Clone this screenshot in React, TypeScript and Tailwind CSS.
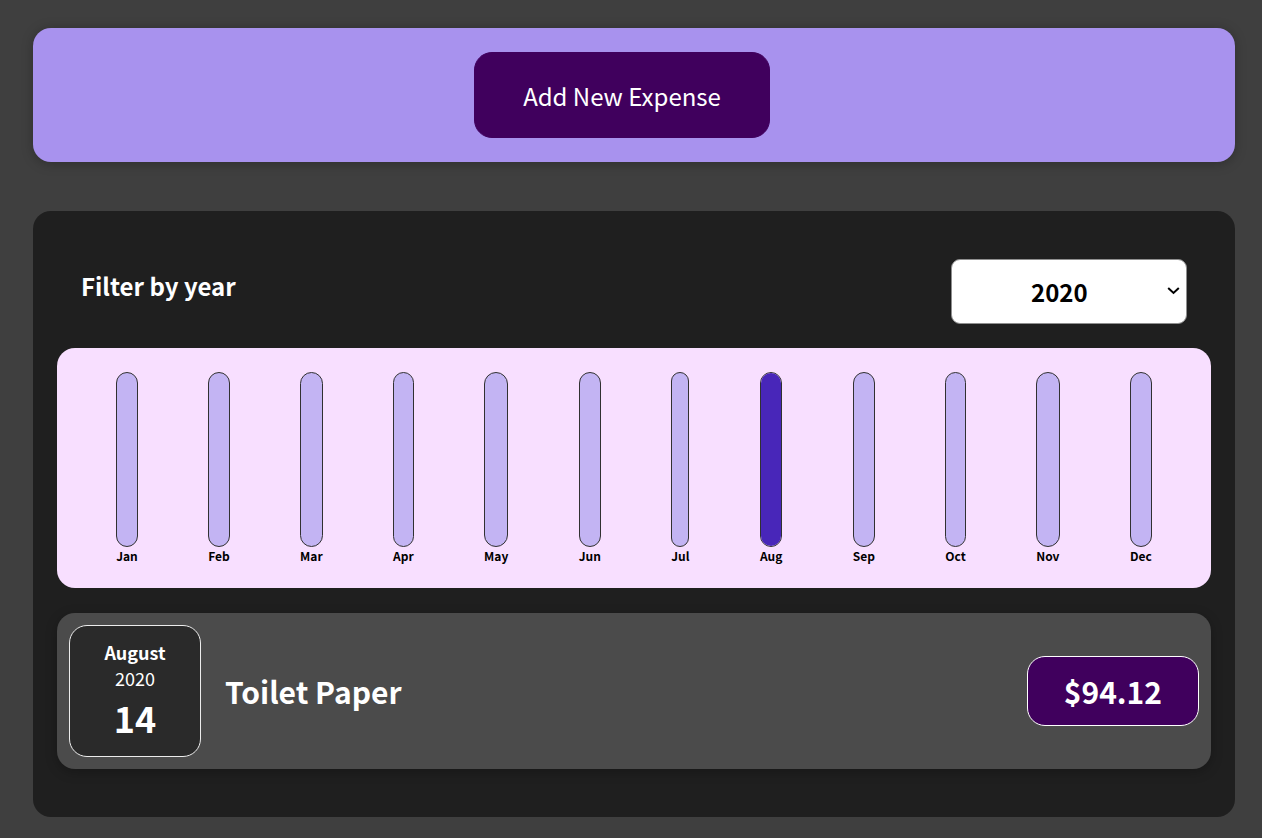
const months = [
  { label: "Jan", value: 0 },
  { label: "Feb", value: 0 },
  { label: "Mar", value: 0 },
  { label: "Apr", value: 0 },
  { label: "May", value: 0 },
  { label: "Jun", value: 0 },
  { label: "Jul", value: 0 },
  { label: "Aug", value: 94.12 },
  { label: "Sep", value: 0 },
  { label: "Oct", value: 0 },
  { label: "Nov", value: 0 },
  { label: "Dec", value: 0 },
];

const maxValue = Math.max(...months.map((m) => m.value));

function ChartBar({ label, value }: { label: string; value: number }) {
  const fill = maxValue > 0 ? `${Math.round((value / maxValue) * 100)}%` : "0%";
  return (
    <div className="h-full flex flex-col items-center">
      <div className="h-full w-full border-[1.5px] border-[#313131] rounded-[18px] bg-[#c3b4f3] overflow-hidden flex flex-col justify-end">
        <div className="w-full bg-[#4826b9]" style={{ height: fill }}></div>
      </div>
      <div className="text-[12px] font-bold text-center text-black">{label}</div>
    </div>
  );
}

export default function App() {
  return (
    <div
      className="min-h-screen bg-[#3f3f3f] pt-[28px] pb-[20px] pl-[33px] pr-[27px] leading-[normal]"
      style={{ fontFamily: '"Noto Sans CJK JP", "Noto Sans", sans-serif' }}
    >
      {/* New expense box */}
      <div className="bg-[#a892ee] p-6 rounded-[18px] text-center shadow-[0_1.5px_12px_rgba(0,0,0,0.25)]">
        <button className="h-[86px] text-[24px] leading-[35px] px-12 border-[1.5px] border-[#40005d] bg-[#40005d] text-white rounded-[18px] mr-6 align-top">
          Add New Expense
        </button>
      </div>

      {/* Expenses card */}
      <div className="mt-[49px] bg-[#1f1f1f] p-6 rounded-[18px]">
        <div className="text-white px-6">
          <div className="flex w-full items-center justify-between my-6">
            <label className="text-[24px] font-bold mb-3">Filter by year</label>
            <div className="relative w-[236px] h-[65px]">
              <select
                defaultValue="2020"
                className="appearance-none w-full h-full bg-white text-black text-[24px] font-bold pl-[79px] rounded-[9px] border-[1.5px] border-[#8f8f8f] outline-none"
              >
                <option value="2022">2022</option>
                <option value="2021">2021</option>
                <option value="2020">2020</option>
                <option value="2019">2019</option>
              </select>
              <svg
                className="absolute right-[7px] top-[27px] pointer-events-none"
                width="13"
                height="9"
                viewBox="0 0 13 9"
                fill="none"
              >
                <path d="M1.2 2 L6.5 7 L11.8 2" stroke="#000" strokeWidth="2" />
              </svg>
            </div>
          </div>
        </div>

        {/* Chart */}
        <div className="p-6 rounded-[18px] bg-[#f8dfff] flex justify-around h-[240px]">
          {months.map((m) => (
            <ChartBar key={m.label} label={m.label} value={m.value} />
          ))}
        </div>

        {/* Expense item */}
        <div className="flex justify-between items-center p-3 mt-[25px] mb-6 rounded-[18px] bg-[#4b4b4b] shadow-[0_3px_12px_rgba(0,0,0,0.25)]">
          <div className="flex flex-1 items-center">
            <div className="flex flex-col w-[132px] h-[132px] border-[1.5px] border-[#ececec] bg-[#2a2a2a] text-white rounded-[18px] items-center justify-center">
              <div className="text-[18px] font-bold">August</div>
              <div className="text-[18px]">2020</div>
              <div className="text-[36px] font-bold">14</div>
            </div>
            <h2 className="flex-1 mx-6 text-[30px] font-bold text-white">Toilet Paper</h2>
          </div>
          <div className="text-[30px] font-bold text-white bg-[#40005d] border-[1.5px] border-white py-3 px-9 rounded-[18px]">
            $94.12
          </div>
        </div>
      </div>
    </div>
  );
}
